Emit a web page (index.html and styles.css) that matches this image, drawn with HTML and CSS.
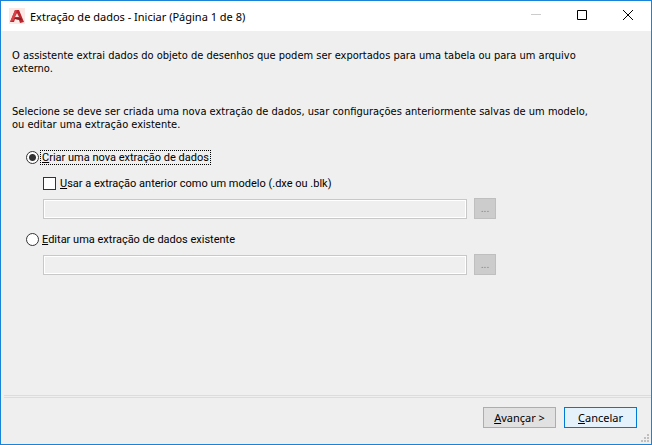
FILE: index.html
```html
<!DOCTYPE html>
<html lang="pt-BR">
<head>
    <meta charset="UTF-8">
    <title>Extração de dados - Iniciar</title>
    <link rel="stylesheet" href="styles.css">
</head>
<body>
    <div class="window">
        <header class="titlebar">
            <svg class="logo" viewBox="0 0 16 16" aria-hidden="true">
                <rect width="16" height="16" fill="#fbe9e6"/>
                <path d="M1 14L6 2H10L15 14L11 15L10 12L6 11L5 14Z" fill="#b9262d"/>
                <path d="M6 2H8L5 12L1 14Z" fill="#d8434a"/>
                <path d="M8 5L10 9H6Z" fill="#fbe0dc"/>
                <path d="M5 10L12 10L13 12L6 11Z" fill="#8f1a20"/>
            </svg>
            <h1>Extração de dados - Iniciar (Página 1 de 8)</h1>
            <div class="controls">
                <button type="button" aria-label="Minimizar" disabled>
                    <svg viewBox="0 0 10 10"><path d="M0 4.5H10" stroke="#ccc"/></svg>
                </button>
                <button type="button" aria-label="Maximizar">
                    <svg viewBox="0 0 10 10"><path d="M.5 .5H9.5V9.5H.5Z" fill="none" stroke="#000"/></svg>
                </button>
                <button type="button" aria-label="Fechar">
                    <svg viewBox="0 0 10 10"><path d="M0 0L10 10M10 0L0 10" stroke="#000"/></svg>
                </button>
            </div>
        </header>

        <form class="wizard">
            <main class="page">
                <p>O assistente extrai dados do objeto de desenhos que podem ser exportados para uma tabela ou para um arquivo externo.</p>
                <p>Selecione se deve ser criada uma nova extração de dados, usar configurações anteriormente salvas de um modelo, ou editar uma extração existente.</p>

                <div class="options">
                    <div class="option">
                        <input type="radio" id="create" name="mode" checked>
                        <label for="create" class="focused"><u>C</u>riar uma nova extração de dados</label>
                    </div>
                    <div class="option nested">
                        <input type="checkbox" id="template">
                        <label for="template"><u>U</u>sar a extração anterior como um modelo (.dxe ou .blk)</label>
                    </div>
                    <div class="file">
                        <input type="text" aria-label="Arquivo de modelo" disabled>
                        <button type="button" disabled>...</button>
                    </div>
                    <div class="option">
                        <input type="radio" id="edit" name="mode">
                        <label for="edit"><u>E</u>ditar uma extração de dados existente</label>
                    </div>
                    <div class="file">
                        <input type="text" aria-label="Extração existente" disabled>
                        <button type="button" disabled>...</button>
                    </div>
                </div>
            </main>

            <footer class="actions">
                <button type="submit"><u>A</u>vançar &gt;</button>
                <button type="button" class="default"><u>C</u>ancelar</button>
                <svg class="grip" viewBox="0 0 8 8" aria-hidden="true">
                    <path d="M6 0h2v2h-2zM3 3h2v2h-2zM6 3h2v2h-2zM0 6h2v2h-2zM3 6h2v2h-2zM6 6h2v2h-2z" fill="#bfbfbf"/>
                </svg>
            </footer>
        </form>
    </div>
</body>
</html>
```
FILE: styles.css
```css
* {
    box-sizing: border-box;
}
body {
    margin: 0;
    font-family: "DejaVu Sans Condensed", sans-serif;
    font-size: 11px;
    color: #000;
}
.window {
    display: flex;
    flex-direction: column;
    min-height: 100vh;
    border: 1px solid #1883d7;
    background: #efefef;
}

/* title bar */
.titlebar {
    display: flex;
    align-items: center;
    height: 30px;
    padding-left: 8px;
    background: #fff;
}
.logo {
    width: 16px;
    height: 16px;
    margin-right: 5px;
}
h1 {
    flex: 1;
    margin: 0;
    font-family: "Noto Sans", sans-serif;
    font-size: 11px;
    font-weight: normal;
}
.controls {
    display: flex;
}
.controls button {
    display: flex;
    align-items: center;
    justify-content: center;
    width: 46px;
    height: 30px;
    padding: 0 0 2px;
    border: none;
    background: none;
}
.controls svg {
    width: 10px;
    height: 10px;
}

/* wizard page */
.wizard {
    display: flex;
    flex: 1;
    flex-direction: column;
}
.page {
    flex: 1;
    padding: 18px 48px 0 11px;
}
p {
    margin: 0 0 30px;
    line-height: 13px;
}
.options {
    display: flex;
    flex-direction: column;
    margin-top: -12px;
    padding-left: 14px;
    font-family: Roboto, sans-serif;
}
.option {
    display: flex;
    align-items: center;
    gap: 2px;
    height: 16px;
}
.option input {
    appearance: none;
    flex: none;
    width: 13px;
    height: 13px;
    margin: 0;
    border: 1px solid #333;
    background: #fff;
}
.option input[type="radio"] {
    border-radius: 50%;
}
.option input[type="radio"]:checked {
    background: radial-gradient(circle, #333 3px, #fff 4px);
}
.option label {
    padding: 0 1px;
    line-height: 13px;
}
.option .focused {
    outline: 1px dotted #000;
}
.nested {
    gap: 3px;
    margin: 10px 0 0 17px;
}
.file {
    display: flex;
    align-items: center;
    gap: 7px;
    max-width: 453px;
    margin: 7px 0 12px 17px;
}
.file input {
    flex: 1;
    height: 20px;
    border: 1px solid #c8c8c8;
    outline: 1px solid #fff;
    outline-offset: -2px;
    background: #efefef;
}
.file button {
    width: 22px;
    height: 21px;
    padding: 0;
    border: 1px solid #bfbfbf;
    background: #ccc;
    color: #838383;
    font-family: inherit;
    font-size: 11px;
}

/* bottom bar */
.actions {
    position: relative;
    display: flex;
    justify-content: flex-end;
    gap: 8px;
    margin-left: 3px;
    padding: 9px 14px 16px;
    border-top: 3px double #dcdcdc;
}
.actions button {
    width: 73px;
    height: 21px;
    padding: 0;
    border: 1px solid #adadad;
    background: #e1e1e1;
    color: #000;
    font-family: "Noto Sans", sans-serif;
    font-size: 11px;
}
.actions .default {
    border-color: #0078d7;
    background: #e5f1fb;
}
.grip {
    position: absolute;
    right: 2px;
    bottom: 2px;
    width: 8px;
    height: 8px;
}
```
